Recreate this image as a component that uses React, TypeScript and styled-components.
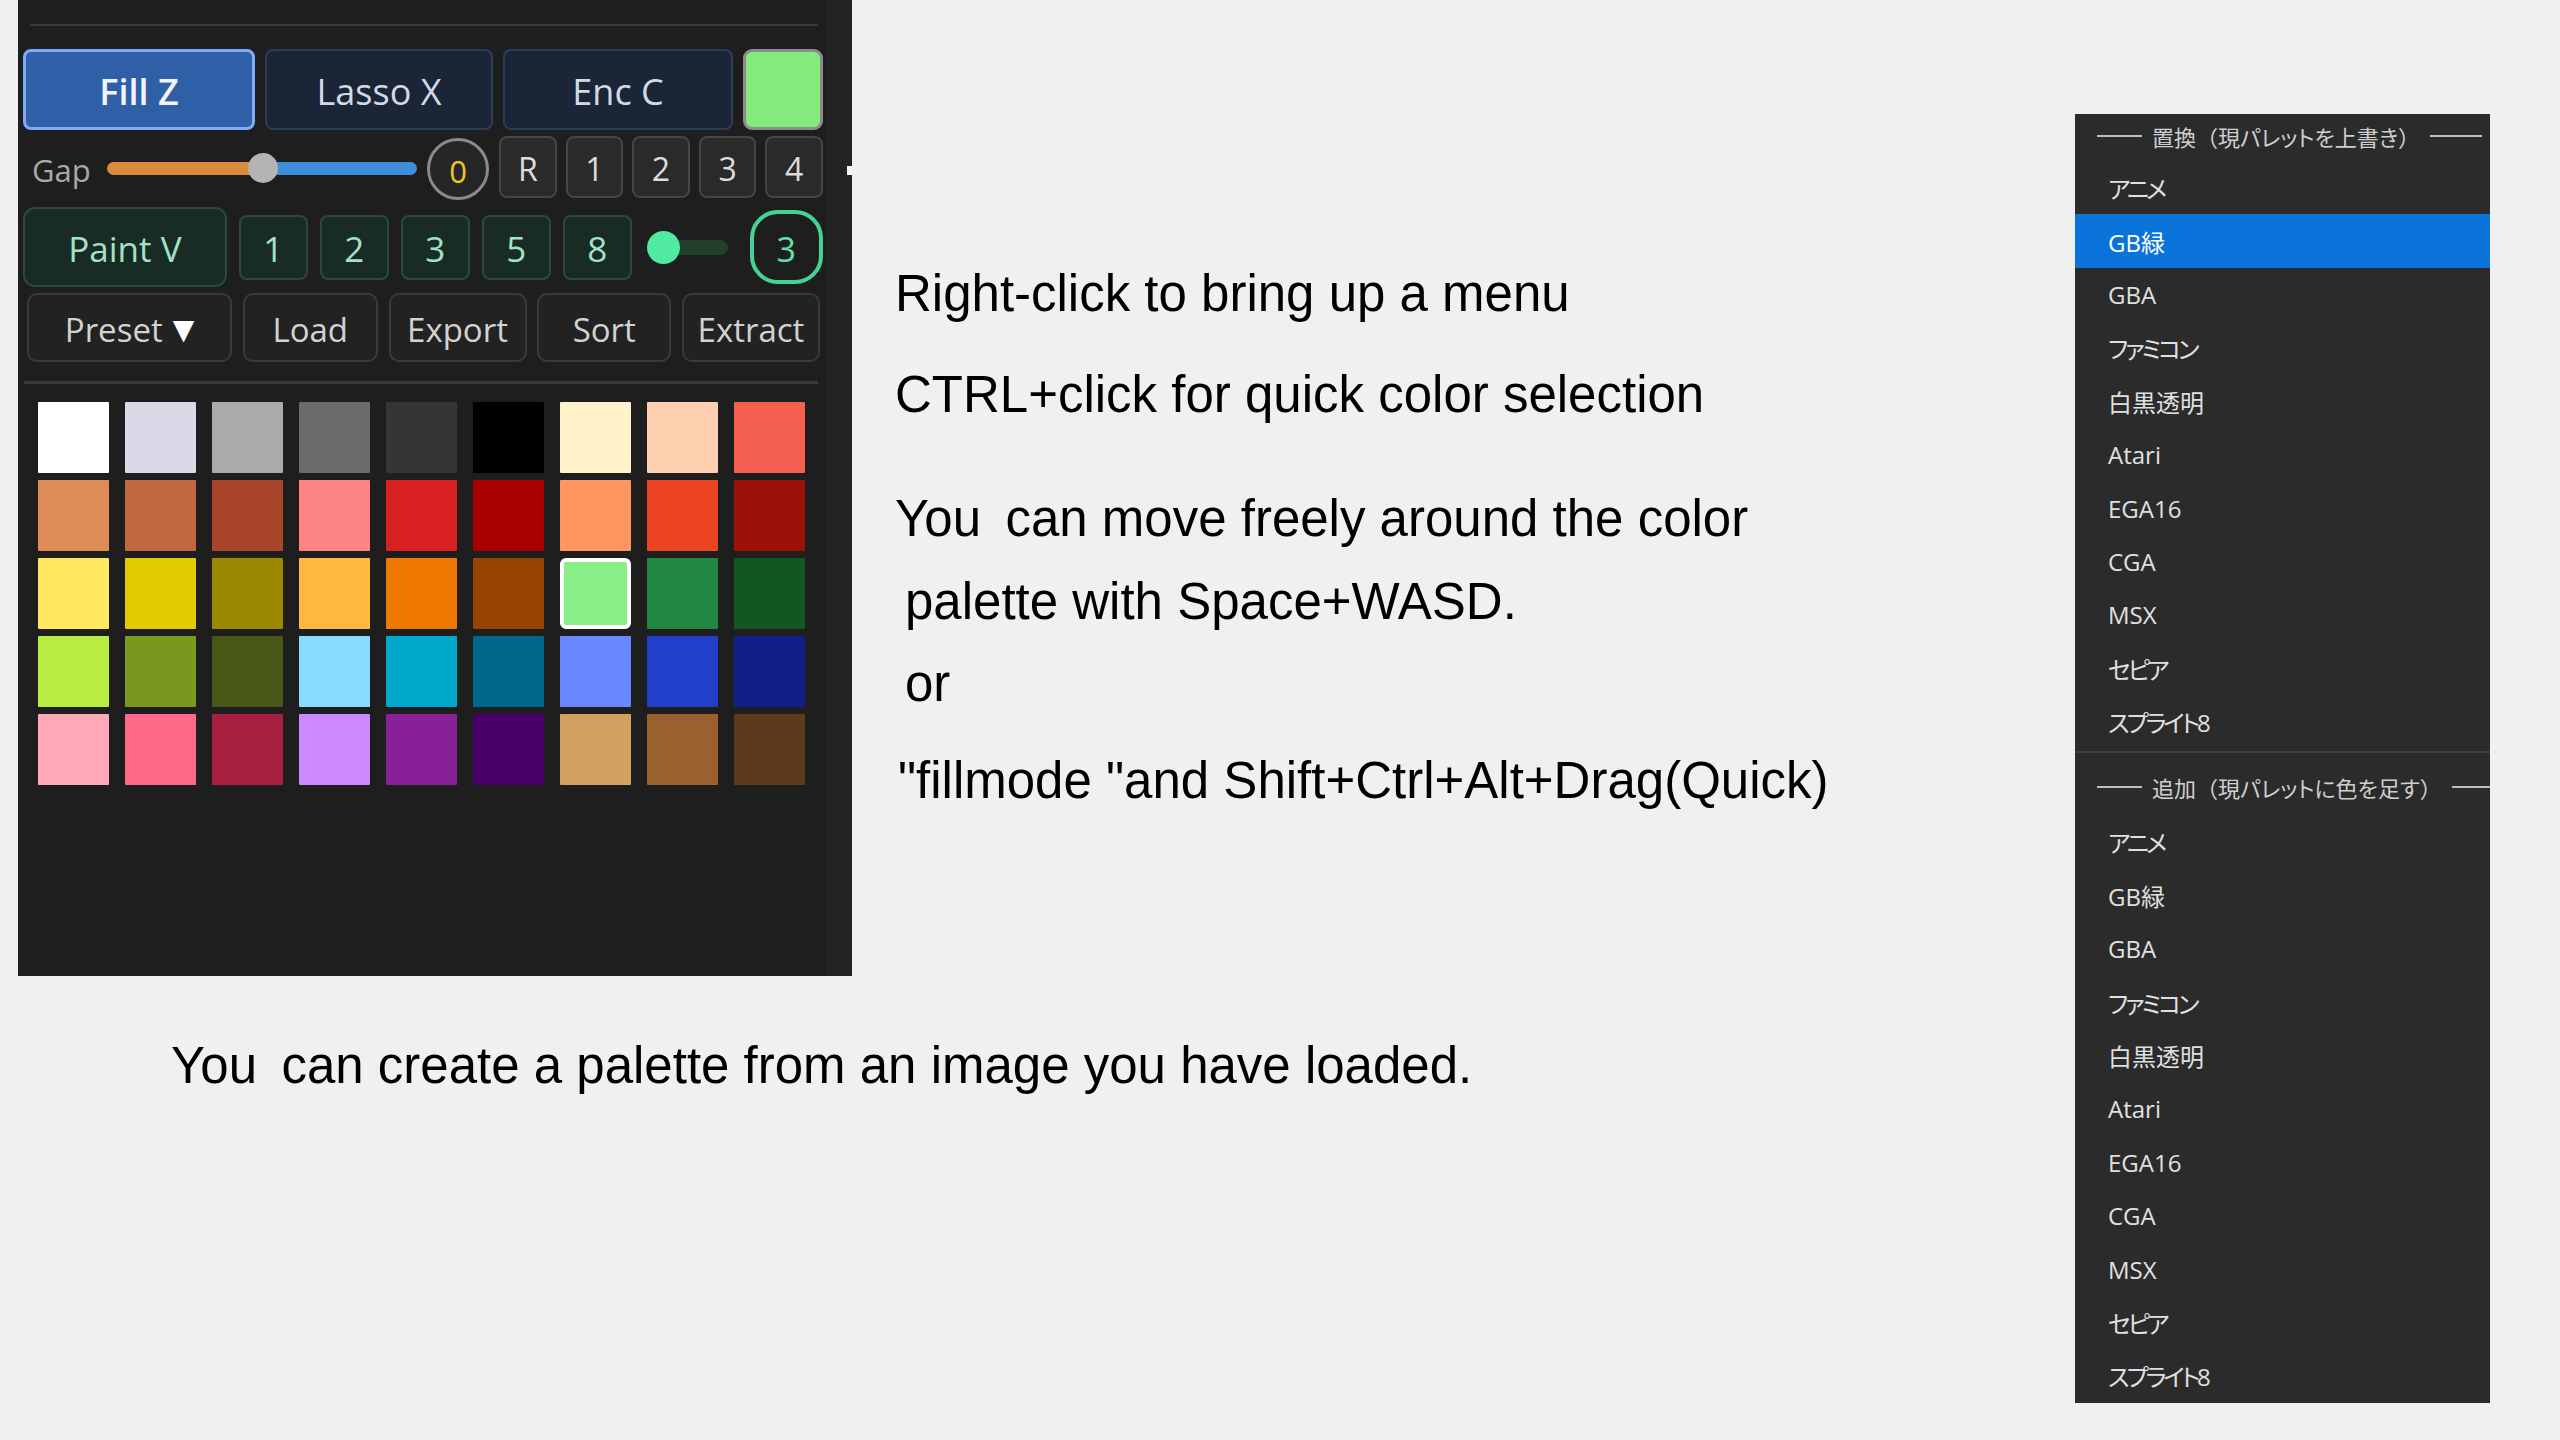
import React from "react";
import styled, { createGlobalStyle } from "styled-components";

const Global = createGlobalStyle`
  html, body { margin: 0; padding: 0; background: #f0f0f0; }
  body { width: 2560px; height: 1440px; overflow: hidden; }
  * { box-sizing: border-box; }
`;

const UI = `"Open Sans", "Noto Sans", "Noto Sans CJK JP", sans-serif`;

const Page = styled.div`
  display: flex;
  align-items: flex-start;
  width: 2560px;
  height: 1440px;
  padding-left: 18px;
  background: #f0f0f0;
`;

const LeftCol = styled.div`
  display: flex;
  flex-direction: column;
  width: 834px;
  flex-shrink: 0;
`;

const Panel = styled.div`
  display: flex;
  height: 976px;
  background: #1e1e1e;
  font-family: ${UI};
`;

const PanelMain = styled.div`
  flex: 1;
  display: flex;
  flex-direction: column;
  padding: 24px 0 0 5px;
`;

const Strip = styled.div`
  width: 25px;
  background: #232323;
  display: flex;
  flex-direction: column;
  padding-top: 166px;
`;

const StripMark = styled.div`
  width: 5px;
  height: 9px;
  margin-left: auto;
  background: #f4f4f4;
`;

const Rule = styled.div<{ $ml: number; $mt: number; $h: number }>`
  height: ${(p) => p.$h}px;
  margin: ${(p) => p.$mt}px 9px 0 ${(p) => p.$ml}px;
  background: #3a3a3a;
`;

const Row = styled.div<{ $mt: number; $h: number; $gap: number }>`
  display: flex;
  align-items: center;
  gap: ${(p) => p.$gap}px;
  height: ${(p) => p.$h}px;
  margin-top: ${(p) => p.$mt}px;
  width: 800px;
`;

const Spacer = styled.div<{ $w: number }>`
  width: ${(p) => p.$w}px;
  flex-shrink: 0;
`;

const ModeButton = styled.div<{ $w: number; $active?: boolean }>`
  width: ${(p) => p.$w}px;
  height: 81px;
  display: flex;
  align-items: center;
  justify-content: center;
  padding-top: 4px;
  border-radius: 8px;
  font-size: 36px;
  background: ${(p) => (p.$active ? "#2f5fa7" : "#1b2538")};
  border: ${(p) => (p.$active ? "3px solid #7eaaf8" : "2px solid #2c3d5c")};
  color: ${(p) => (p.$active ? "#f2f5ff" : "#d3d9e4")};
  font-weight: ${(p) => (p.$active ? 600 : 400)};
`;

const CurrentColor = styled.div`
  width: 80px;
  height: 81px;
  border-radius: 9px;
  border: 3px solid #8c8c8c;
  background: #84ea7c;
`;

const GapLabel = styled.div`
  width: 84px;
  padding: 3px 0 0 9px;
  font-size: 31px;
  color: #a9a9a9;
`;

const Track = styled.div`
  position: relative;
  width: 310px;
  height: 13px;
  border-radius: 7px;
  background: linear-gradient(to right, #d98b3f 0 156px, #3d8fdc 156px 100%);
`;

const Thumb = styled.div<{ $x: number }>`
  position: absolute;
  top: 50%;
  left: ${(p) => p.$x}px;
  width: 30px;
  height: 30px;
  margin: -15px 0 0 -15px;
  border-radius: 50%;
  background: #b4b4b4;
`;

const ValueCircle = styled.div`
  width: 62px;
  height: 62px;
  border-radius: 50%;
  border: 3px solid #8a8a8a;
  background: #262626;
  color: #f2c324;
  font-size: 31px;
  display: flex;
  align-items: center;
  justify-content: center;
  padding-top: 3px;
  margin-top: 2px;
`;

const KeyGroup = styled.div`
  display: flex;
  gap: 9px;
  width: 324px;
`;

const KeyButton = styled.div`
  flex: 1;
  height: 62px;
  margin-top: -2px;
  border-radius: 8px;
  border: 2px solid #454545;
  background: #2a2a2a;
  color: #dcdcdc;
  font-size: 32px;
  display: flex;
  align-items: center;
  justify-content: center;
  padding-top: 3px;
`;

const GreenButton = styled.div<{ $w: number; $h: number; $r: number }>`
  width: ${(p) => p.$w}px;
  height: ${(p) => p.$h}px;
  border-radius: ${(p) => p.$r}px;
  border: 2px solid #2a4a3e;
  background: #182b24;
  color: #a3e2c6;
  font-size: 35px;
  display: flex;
  align-items: center;
  justify-content: center;
  padding-top: 3px;
`;

const SizeGroup = styled.div`
  display: flex;
  gap: 12px;
`;

const MiniSlider = styled.div`
  width: 83px;
  height: 33px;
  display: flex;
  align-items: center;
  position: relative;
  margin-left: 3px;
`;

const MiniTrack = styled.div`
  margin-left: 16px;
  flex: 1;
  height: 15px;
  border-radius: 8px;
  background: #23402f;
`;

const MiniDot = styled.div`
  position: absolute;
  left: 0;
  top: 0;
  width: 33px;
  height: 33px;
  border-radius: 50%;
  background: #50eaa0;
`;

const SizeValue = styled.div`
  width: 75px;
  height: 74px;
  border-radius: 28px;
  border: 4px solid #43d495;
  color: #62e0a8;
  font-size: 34px;
  display: flex;
  align-items: center;
  justify-content: center;
  padding-top: 3px;
  margin-left: 10px;
`;

const ActionRow = styled.div`
  display: grid;
  grid-template-columns: 205px 135px 138px 134px 138px;
  column-gap: 10.75px;
  height: 69px;
  margin: 6px 0 0 4px;
`;

const ActionButton = styled.div`
  border-radius: 10px;
  border: 2px solid #3a3a3a;
  background: #222222;
  color: #d2d2d2;
  font-size: 33px;
  display: flex;
  align-items: center;
  justify-content: center;
  gap: 10px;
  padding-top: 3px;
`;

const Caret = styled.span`
  font-family: "DejaVu Sans", sans-serif;
  font-size: 28px;
  color: #ffffff;
`;

const SwatchGrid = styled.div`
  display: grid;
  grid-template-columns: repeat(9, 71px);
  grid-auto-rows: 71px;
  column-gap: 16px;
  row-gap: 7px;
  margin: 18px 0 0 15px;
`;

const Swatch = styled.div<{ $c: string; $sel?: boolean }>`
  background: ${(p) => p.$c};
  border-radius: ${(p) => (p.$sel ? "6px" : "1px")};
  border: ${(p) => (p.$sel ? "4px solid #ffffff" : "none")};
`;

const TextLine = styled.div<{ $mt: number; $indent?: number }>`
  margin-top: ${(p) => p.$mt}px;
  padding-left: ${(p) => p.$indent ?? 0}px;
  font-family: "Liberation Sans", Arial, sans-serif;
  font-size: 51px;
  line-height: 60px;
  color: #000;
  white-space: nowrap;
`;

const MidCol = styled.div`
  display: flex;
  flex-direction: column;
  margin-left: 43px;
`;

const Menu = styled.div`
  margin: 114px 70px 0 auto;
  width: 415px;
  background: #2b2b2b;
  display: flex;
  flex-direction: column;
  font-family: "Open Sans", "Noto Sans CJK JP", sans-serif;
  font-feature-settings: "palt";
`;

const MenuHeader = styled.div<{ $h: number; $pt: number; $pb: number; $rInset: number }>`
  height: ${(p) => p.$h}px;
  padding: ${(p) => p.$pt}px ${(p) => p.$rInset}px ${(p) => p.$pb}px 22px;
  display: flex;
  align-items: center;
  gap: 10px;
  font-family: "Noto Sans CJK JP", sans-serif;
  font-feature-settings: "palt";
  font-size: 22px;
  color: #cfcfcf;
  white-space: nowrap;
`;

const Paren = styled.span`
  font-feature-settings: normal;
`;

const HeaderLine = styled.div<{ $w?: number }>`
  height: 2px;
  background: #bdbdbd;
  ${(p) => (p.$w ? `width: ${p.$w}px;` : "flex: 1;")}
`;

const MenuItem = styled.div<{ $active?: boolean; $kana?: boolean }>`
  height: 53.4px;
  padding-left: 33px;
  display: flex;
  align-items: center;
  font-size: 24px;
  letter-spacing: ${(p) => (p.$kana ? "-3px" : "0")};
  color: ${(p) => (p.$active ? "#ffffff" : "#e0e0e0")};
  background: ${(p) => (p.$active ? "#0a74da" : "transparent")};
`;

const MenuDivider = styled.div`
  height: 2px;
  margin-top: 3px;
  background: #3e3e3e;
`;

const swatches = [
  "#ffffff", "#dcd8e8", "#aaaaaa", "#6a6a6a", "#353535", "#000000", "#fff1c8", "#ffd0b0", "#f55f50",
  "#e08c58", "#c06840", "#a84428", "#ff8484", "#d82020", "#a80000", "#ff9660", "#ec4422", "#9a1208",
  "#ffe860", "#e0cc00", "#9a8800", "#ffb840", "#ef7800", "#984400", "#88ee88", "#208840", "#105820",
  "#b8ec40", "#789820", "#485818", "#88dcff", "#00a8cc", "#006888", "#6888ff", "#2040cc", "#102088",
  "#ffa8b8", "#ff6888", "#a82040", "#cc88ff", "#882098", "#480068", "#d4a060", "#9a6030", "#5c3a1c",
];

const presets = ["アニメ", "GB緑", "GBA", "ファミコン", "白黒透明", "Atari", "EGA16", "CGA", "MSX", "セピア", "スプライト8"];
const isKana = (s: string) => /[\u30A0-\u30FF]/.test(s);

export default function App() {
  return (
    <>
      <Global />
      <Page>
        <LeftCol>
          <Panel>
            <PanelMain>
              <Rule $ml={7} $mt={0} $h={2} />
              <Row $mt={23} $h={81} $gap={10}>
                <ModeButton $w={232} $active>Fill Z</ModeButton>
                <ModeButton $w={228}>Lasso X</ModeButton>
                <ModeButton $w={230}>Enc C</ModeButton>
                <CurrentColor />
              </Row>
              <Row $mt={6} $h={64} $gap={0}>
                <GapLabel>Gap</GapLabel>
                <Track>
                  <Thumb $x={156} />
                </Track>
                <Spacer $w={10} />
                <ValueCircle>0</ValueCircle>
                <Spacer $w={10} />
                <KeyGroup>
                  {["R", "1", "2", "3", "4"].map((k) => (
                    <KeyButton key={k}>{k}</KeyButton>
                  ))}
                </KeyGroup>
              </Row>
              <Row $mt={7} $h={80} $gap={12}>
                <GreenButton $w={209} $h={80} $r={12}>Paint V</GreenButton>
                <SizeGroup>
                  {["1", "2", "3", "5", "8"].map((k) => (
                    <GreenButton key={k} $w={69} $h={65} $r={8}>{k}</GreenButton>
                  ))}
                </SizeGroup>
                <MiniSlider>
                  <MiniTrack />
                  <MiniDot />
                </MiniSlider>
                <SizeValue>3</SizeValue>
              </Row>
              <ActionRow>
                <ActionButton>
                  Preset<Caret>▼</Caret>
                </ActionButton>
                <ActionButton>Load</ActionButton>
                <ActionButton>Export</ActionButton>
                <ActionButton>Sort</ActionButton>
                <ActionButton>Extract</ActionButton>
              </ActionRow>
              <Rule $ml={1} $mt={19} $h={3} />
              <SwatchGrid>
                {swatches.map((c, i) => (
                  <Swatch key={i} $c={c} $sel={i === 24} />
                ))}
              </SwatchGrid>
            </PanelMain>
            <Strip>
              <StripMark />
            </Strip>
          </Panel>
          <TextLine $mt={60} $indent={153}>You{"\u2009"} can create a palette from an image you have loaded.</TextLine>
        </LeftCol>
        <MidCol>
          <TextLine $mt={264}>Right-click to bring up a menu</TextLine>
          <TextLine $mt={41}>CTRL+click for quick color selection</TextLine>
          <TextLine $mt={64}>You{"\u2009"} can move freely around the color</TextLine>
          <TextLine $mt={23} $indent={10}>palette with Space+WASD.</TextLine>
          <TextLine $mt={22} $indent={10}>or</TextLine>
          <TextLine $mt={37} $indent={3}>"fillmode "and Shift+Ctrl+Alt+Drag(Quick)</TextLine>
        </MidCol>
        <Menu>
          <MenuHeader $h={47} $pt={0} $pb={4} $rInset={8}>
            <HeaderLine $w={45} />
            <span>
              置換<Paren>（</Paren>現パレットを上書き<Paren>）</Paren>
            </span>
            <HeaderLine />
          </MenuHeader>
          {presets.map((p, i) => (
            <MenuItem key={"a" + i} $active={i === 1} $kana={isKana(p)}>{p}</MenuItem>
          ))}
          <MenuDivider />
          <MenuHeader $h={62} $pt={6} $pb={0} $rInset={0}>
            <HeaderLine $w={45} />
            <span>
              追加<Paren>（</Paren>現パレットに色を足す<Paren>）</Paren>
            </span>
            <HeaderLine />
          </MenuHeader>
          {presets.map((p, i) => (
            <MenuItem key={"b" + i} $kana={isKana(p)}>{p}</MenuItem>
          ))}
        </Menu>
      </Page>
    </>
  );
}
